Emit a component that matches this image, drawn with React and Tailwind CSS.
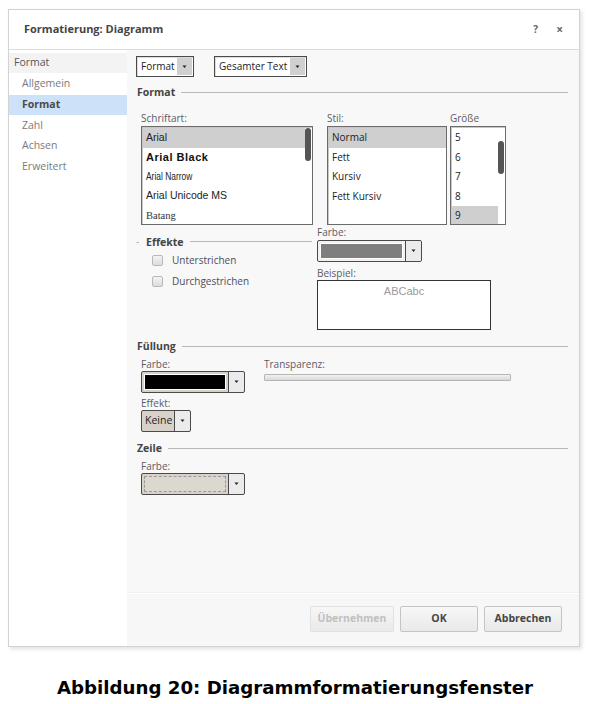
import React from 'react';

const Label = ({ children, className = '' }) => (
  <div className={`text-[10px] leading-[12px] text-[#5c5a68] ${className}`}>{children}</div>
);

const Arrow = () => (
  <svg width="7" height="4" viewBox="0 0 7 4" className="block">
    <path d="M1.5 0.5h4L3.5 3z" fill="#222" />
  </svg>
);

const SectionHeader = ({ title, className = '' }) => (
  <div className={`flex items-center ${className}`}>
    <span className="text-[10.5px] font-bold text-[#444] leading-[14px]">{title}</span>
    <div className="flex-1 h-px bg-[#b8b8b8] ml-[6px]" />
  </div>
);

const ListBox = ({ items, width, selected, scroll, selWidth }) => (
  <div
    className="relative h-[99px] border border-[#6b6b6b] bg-white shadow-[inset_1px_1px_0_#c8c8c8] overflow-hidden"
    style={{ width }}
  >
    <div className="pt-[1px] pl-[1px]">
      {items.map((it, i) => (
        <div
          key={i}
          className={`h-[19.5px] flex items-center pl-[3px] whitespace-nowrap ${i === selected ? 'bg-[#cfcfcf]' : ''}`}
          style={{ width: i === selected ? selWidth : undefined }}
        >
          <span className={it.className || 'text-[10px] text-[#222]'}>{it.label}</span>
        </div>
      ))}
    </div>
    {scroll && (
      <div
        className="absolute right-[1px] w-[6px] rounded-[3px] bg-[#555]"
        style={{ top: scroll.top, height: scroll.height }}
      />
    )}
  </div>
);

const SimpleCombo = ({ label, width }) => (
  <div className="flex h-[21px] border border-[#4a4a4a] bg-white shadow-[inset_1px_1px_0_#ddd]" style={{ width }}>
    <div className="flex-1 flex items-center pl-[4px] text-[10px] text-[#222] whitespace-nowrap overflow-hidden">{label}</div>
    <div className="w-[15px] bg-[#d0d0d0] flex items-center justify-center m-[1px]">
      <Arrow />
    </div>
  </div>
);

const ColorCombo = ({ width, swatch, tan = true }) => (
  <div
    className={`flex h-[22px] border border-[#4a4a4a] rounded-[2px] ${tan ? 'bg-[#d6d2c9]' : 'bg-[#f2f2f2]'}`}
    style={{ width }}
  >
    <div className="flex-1 p-[2px]">{swatch}</div>
    <div className="w-[16px] border-l border-[#4a4a4a] flex items-center justify-center bg-[#ebebeb] rounded-r-[2px]">
      <Arrow />
    </div>
  </div>
);

const Checkbox = ({ label }) => (
  <div className="flex items-center h-[21px]">
    <div className="w-[11px] h-[11px] rounded-[2px] border border-[#b9b9b9] bg-gradient-to-b from-[#f4f4f4] to-[#dcdcdc]" />
    <span className="ml-[9px] text-[10px] text-[#4d4d5a]">{label}</span>
  </div>
);

const Button = ({ children, width, disabled }) => (
  <div
    className={`h-[26px] flex items-center justify-center rounded-[2px] border text-[10.5px] font-bold bg-gradient-to-b from-[#f7f7f7] to-[#e9e9e9] ${
      disabled ? 'border-[#e1e1e1] text-[#c0c0c0]' : 'border-[#c4c4c4] text-[#454545]'
    }`}
    style={{ width }}
  >
    {children}
  </div>
);

const App = () => {
  const fonts = [
    { label: 'Arial', className: "text-[10.5px] text-[#222] font-['Liberation_Sans',sans-serif]" },
    { label: 'Arial Black', className: "text-[11px] text-[#111] font-black tracking-[0.5px] font-['Liberation_Sans',sans-serif]" },
    { label: 'Arial Narrow', className: "inline-block origin-left scale-x-[0.8] text-[10.5px] text-[#222] font-['Liberation_Sans',sans-serif]" },
    { label: 'Arial Unicode MS', className: "text-[10.5px] text-[#222] font-['Liberation_Sans',sans-serif]" },
    { label: 'Batang', className: "text-[10.5px] text-[#333] font-['Liberation_Serif',serif]" },
  ];
  const styles = ['Normal', 'Fett', 'Kursiv', 'Fett Kursiv'].map((s) => ({ label: s }));
  const sizes = ['5', '6', '7', '8', '9'].map((s) => ({ label: s }));

  return (
    <div className="w-[590px] h-[704px] bg-white font-['Open_Sans',sans-serif] overflow-hidden">
      <div className="pt-[9px] pl-[8px]">
        <div className="w-[572px] h-[638px] flex flex-col border border-[#d3d3d3] bg-white shadow-[2px_2px_4px_rgba(0,0,0,0.12)]">
          {/* Title bar */}
          <div className="h-[40px] flex items-center border-b border-[#dcdcdc] pl-[15px] pr-[16px]">
            <span className="text-[11px] font-bold text-[#444]">Formatierung: Diagramm</span>
            <span className="ml-auto text-[10px] font-bold text-[#666]">?</span>
            <span className="ml-[18px] text-[12px] font-bold text-[#666] leading-none">×</span>
          </div>

          <div className="flex flex-1">
            {/* Sidebar */}
            <div className="w-[118px] bg-white pt-[3px]">
              <div className="h-[20px] flex items-center pl-[5px] bg-[#f3f3f3] text-[10.5px] text-[#555]">Format</div>
              <div className="h-[1px]" />
              {['Allgemein', 'Format', 'Zahl', 'Achsen', 'Erweitert'].map((it) => (
                <div
                  key={it}
                  className={`h-[20.6px] flex items-center pl-[13px] text-[10.5px] ${
                    it === 'Format' ? 'bg-[#cde1f8] font-bold text-[#4a4a4a]' : 'text-[#7a7a7a]'
                  }`}
                >
                  {it}
                </div>
              ))}
            </div>

            {/* Content */}
            <div className="flex-1 flex flex-col bg-[#f8f8f8]">
              <div className="flex-1 pl-[9px] pr-[11px] pt-[6px]">
                <div className="flex gap-[20px]">
                  <SimpleCombo label="Format" width={58} />
                  <SimpleCombo label="Gesamter Text" width={93} />
                </div>

                <SectionHeader title="Format" className="mt-[8px] pl-[1px]" />

                <div className="flex mt-[13px] pl-[5px]">
                  <div>
                    <Label>Schriftart:</Label>
                    <div className="mt-[2px]">
                      <ListBox items={fonts} width={172} selected={0} selWidth={162} scroll={{ top: 1, height: 33 }} />
                    </div>
                  </div>
                  <div className="ml-[14px]">
                    <Label>Stil:</Label>
                    <div className="mt-[2px]">
                      <ListBox items={styles} width={120} selected={0} selWidth={117} />
                    </div>
                  </div>
                  <div className="ml-[3px]">
                    <Label>Größe</Label>
                    <div className="mt-[2px]">
                      <ListBox items={sizes} width={56} selected={4} selWidth={46} scroll={{ top: 14, height: 33 }} />
                    </div>
                  </div>
                </div>

                <div className="flex mt-[1px]">
                  <div className="w-[176px] pt-[8px]">
                    <div className="flex items-center">
                      <span className="text-[#aaa] text-[10px] w-[10px]">-</span>
                      <span className="text-[10.5px] font-bold text-[#444] leading-[14px]">Effekte</span>
                      <div className="flex-1 h-px bg-[#b8b8b8] ml-[7px]" />
                    </div>
                    <div className="pl-[16px] mt-[1px]">
                      <Checkbox label="Unterstrichen" />
                      <Checkbox label="Durchgestrichen" />
                    </div>
                  </div>
                  <div className="ml-[5px]">
                    <Label>Farbe:</Label>
                    <div className="mt-[2px]">
                      <ColorCombo
                        width={105}
                        tan={false}
                        swatch={<div className="h-full bg-[#7f7f7f] border border-white" />}
                      />
                    </div>
                    <Label className="mt-[5px]">Beispiel:</Label>
                    <div className="mt-[1px] w-[174px] h-[50px] border border-[#333] bg-white flex justify-center pt-[3px]">
                      <span className="text-[11px] text-[#9a9a9a] font-['Liberation_Sans',sans-serif] leading-[14px]">ABCabc</span>
                    </div>
                  </div>
                </div>

                <SectionHeader title="Füllung" className="mt-[9px] pl-[1px]" />

                <div className="flex pl-[5px] mt-[5px]">
                  <div>
                    <Label>Farbe:</Label>
                    <div className="mt-[1px]">
                      <ColorCombo width={104} swatch={<div className="h-full bg-black border border-white" />} />
                    </div>
                  </div>
                  <div className="ml-[19px]">
                    <Label>Transparenz:</Label>
                    <div className="mt-[4px] w-[247px] h-[7px] rounded-[1px] border border-[#b5b5b5] bg-gradient-to-b from-[#f2f2f2] to-[#dadada]" />
                  </div>
                </div>

                <div className="pl-[5px] mt-[4px]">
                  <Label>Effekt:</Label>
                  <div className="mt-[1px] flex h-[22px] w-[50px] border border-[#4a4a4a] rounded-[2px] bg-[#d6d2c9]">
                    <div className="flex-1 flex items-center pl-[3px] text-[10.5px] text-[#222]">Keine</div>
                    <div className="w-[16px] border-l border-[#4a4a4a] flex items-center justify-center bg-[#ebebeb] rounded-r-[2px]">
                      <Arrow />
                    </div>
                  </div>
                </div>

                <SectionHeader title="Zeile" className="mt-[9px] pl-[1px]" />

                <div className="pl-[5px] mt-[5px]">
                  <Label>Farbe:</Label>
                  <div className="mt-[1px]">
                    <ColorCombo
                      width={104}
                      swatch={<div className="h-full border border-dashed border-[#9a9a9a] bg-[#dcd8d0]" />}
                    />
                  </div>
                </div>
              </div>

              {/* Footer */}
              <div className="h-[53px] border-t border-white shadow-[0_-1px_0_#f0f0f0] bg-[#f7f7f7] flex items-start justify-end gap-[6px] pt-[12px] pr-[17px]">
                <Button width={84} disabled>Übernehmen</Button>
                <Button width={78}>OK</Button>
                <Button width={78}>Abbrechen</Button>
              </div>
            </div>
          </div>
        </div>
      </div>

      <div className="mt-[27px] text-center text-[18.2px] font-bold text-black font-['DejaVu_Sans',sans-serif]">
        Abbildung 20: Diagrammformatierungsfenster
      </div>
    </div>
  );
};

export default App;
